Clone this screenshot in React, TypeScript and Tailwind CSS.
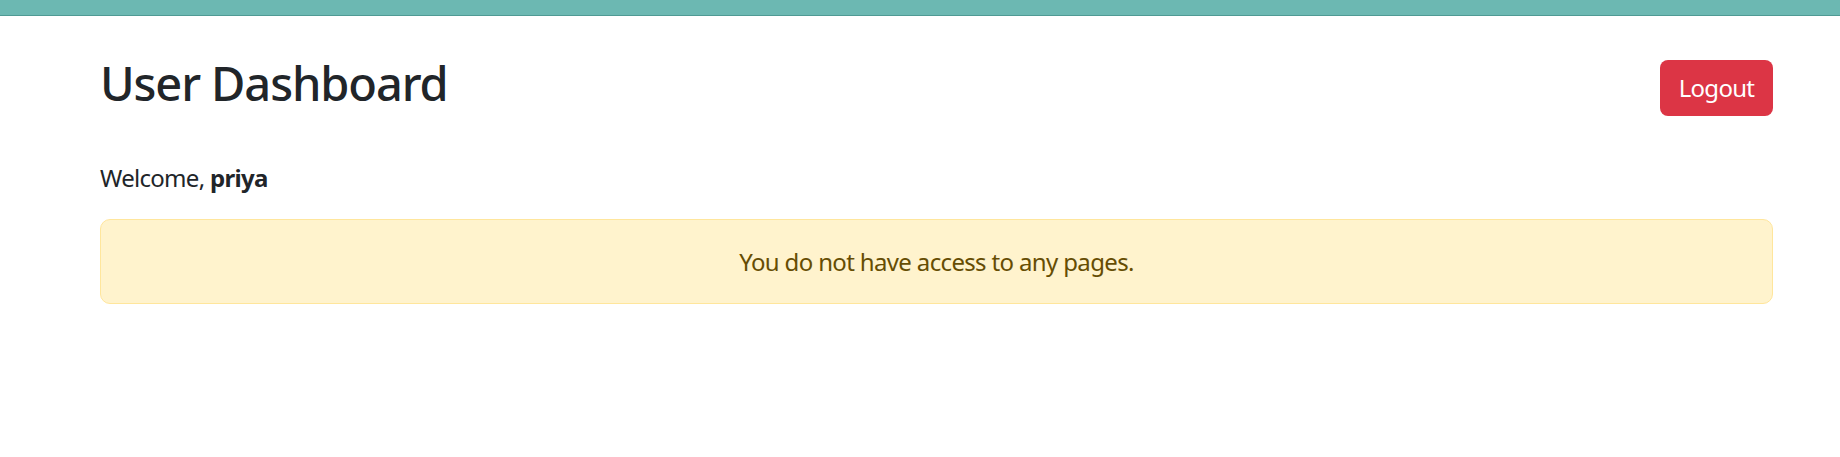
export default function App() {
  return (
    <div className="min-h-[457px] bg-white font-['Noto_Sans',sans-serif] text-[#212529]">
      <div className="h-[16px] bg-[#6cb8b2] border-b border-[#4f9a94]" />
      <div className="pl-[100px] pr-[67px] pt-[38px]">
        <div className="flex items-center justify-between">
          <h1 className="mb-[10px] h-[58px] text-[47px] font-medium leading-[58px] tracking-[-1.1px]">User Dashboard</h1>
          <button className="h-[56px] w-[113px] rounded-[8px] bg-[#dc3545] text-[24px] text-white leading-[36px] tracking-[-0.7px]">Logout</button>
        </div>
        <p className="mt-[38px] mb-[23px] text-[24px] leading-[36px] tracking-[-0.7px]">
          Welcome, <strong className="font-bold">priya</strong>
        </p>
        <div className="flex h-[85px] items-center justify-center rounded-[10px] border border-[#ffe69c] bg-[#fff3cd] text-[24px] leading-[36px] tracking-[-0.65px] text-[#664d03]">
          You do not have access to any pages.
        </div>
      </div>
    </div>
  );
}
